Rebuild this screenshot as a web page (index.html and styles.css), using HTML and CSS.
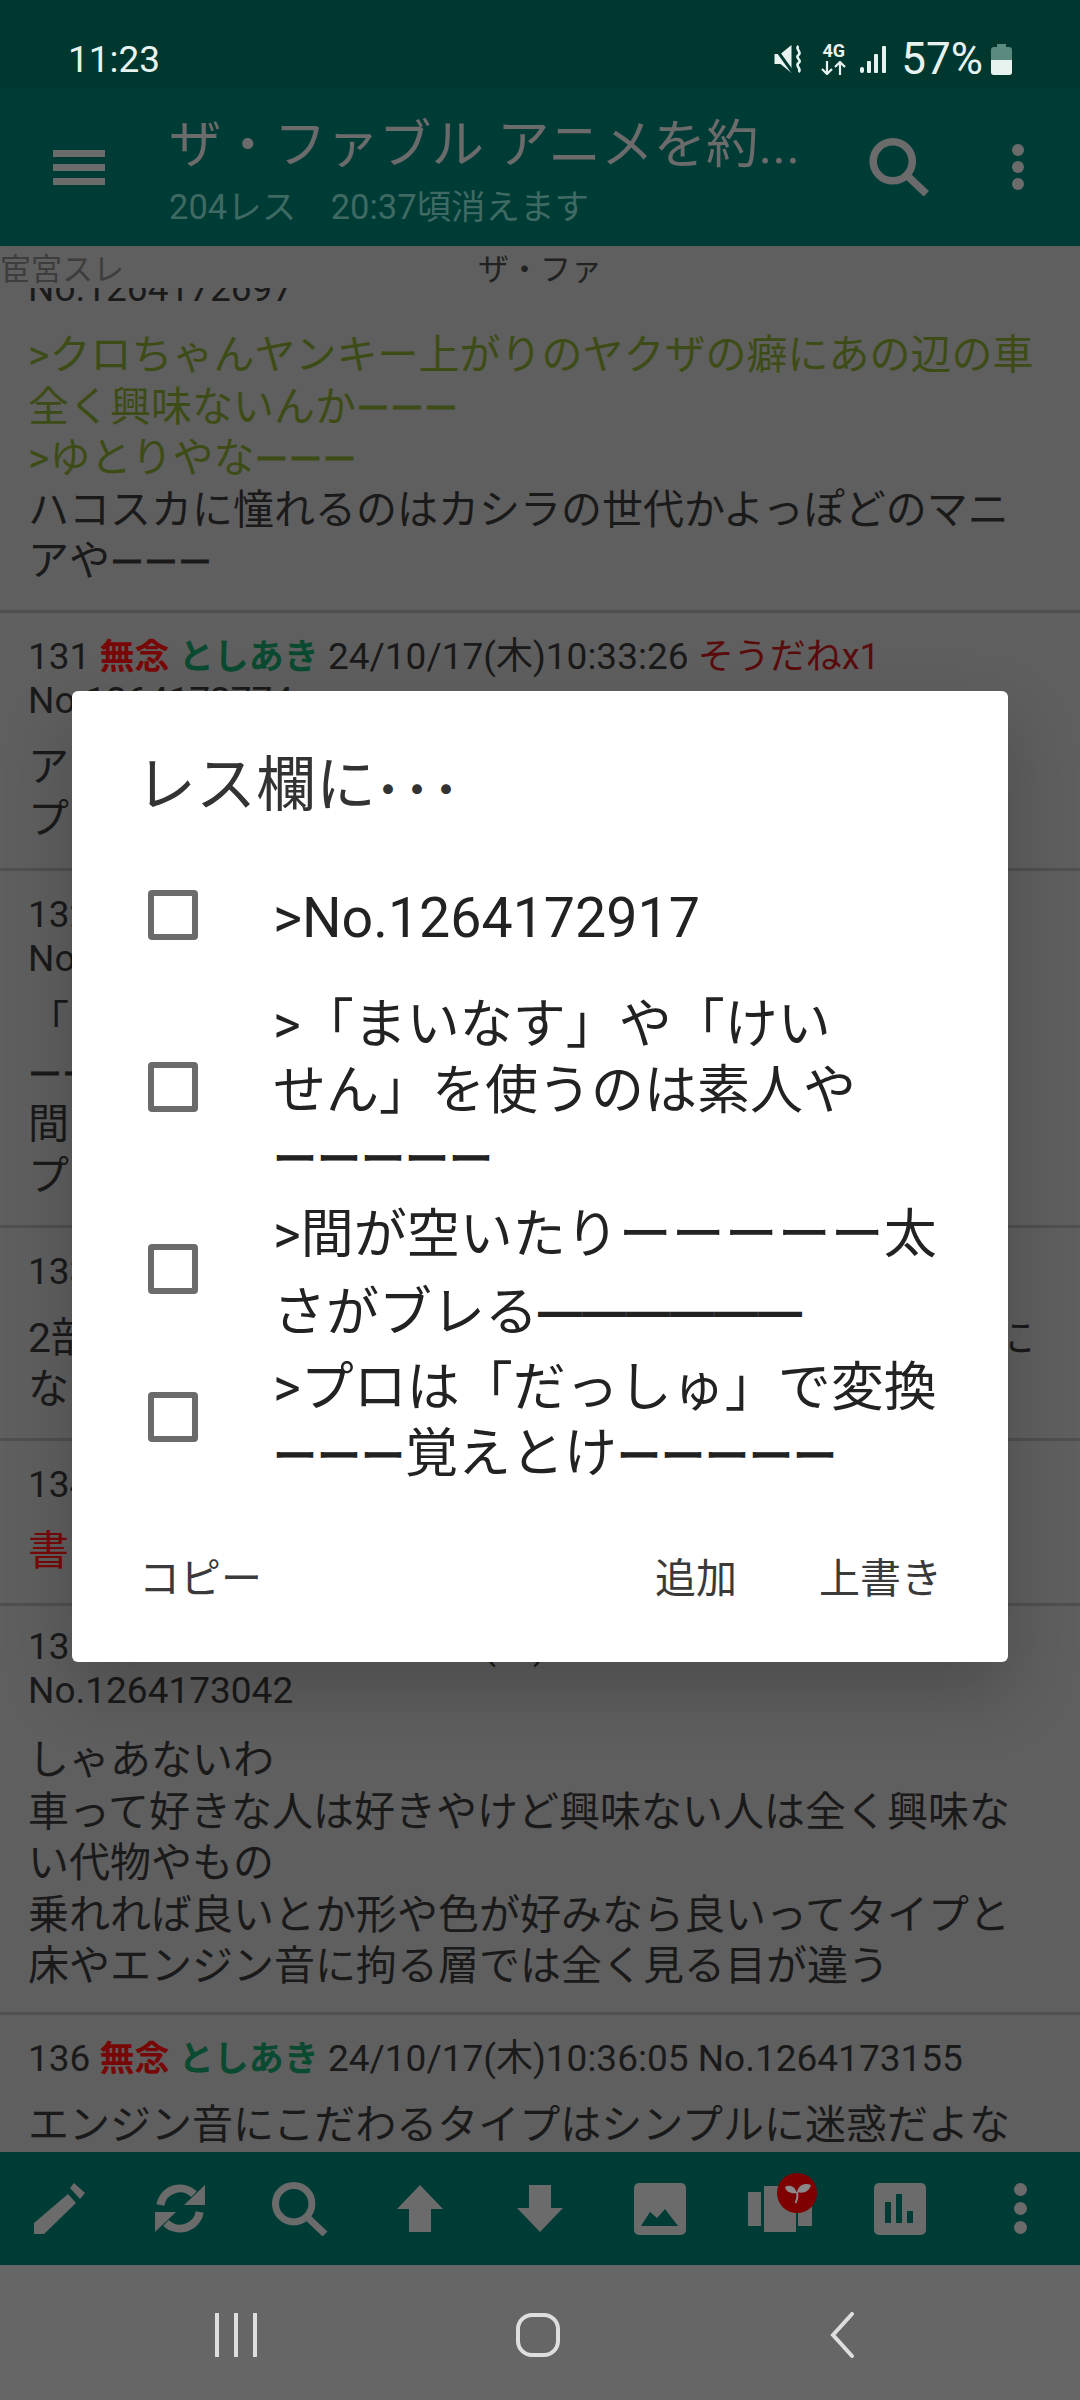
FILE: index.html
```html
<!DOCTYPE html>
<html lang="ja">
<head>
    <meta charset="UTF-8">
    <meta name="viewport" content="width=device-width, initial-scale=1.0">
    <title>ザ・ファブル アニメを約...</title>
    <link rel="stylesheet" href="styles.css">
</head>
<body>
    <div id="app">
        <div class="status-bar">
            <span class="clock">11:23</span>
            <div class="status-icons">
                <svg class="ic-mute" viewBox="0 0 29 28"><path d="M0 9h6L17 0v28L6 19H0z" fill="#e8f3f0"/><path d="M0 2l18 25" stroke="#00382f" stroke-width="3"/><path d="M24 1c-4 3 4 6 0 9s4 5 0 8 4 6 0 9" fill="none" stroke="#e8f3f0" stroke-width="2.6"/></svg>
                <div class="net">
                    <span class="net-label">4G</span>
                    <svg viewBox="0 0 25 14"><path d="M6 0v13M1 8l5 5 5-5M19 14V1M14 6l5-5 5 5" fill="none" stroke="#e8f3f0" stroke-width="2.2"/></svg>
                </div>
                <svg class="ic-signal" viewBox="0 0 26 27"><rect x="0" y="21" width="4" height="6" rx="2" fill="#e8f3f0"/><rect x="7" y="15" width="4" height="12" rx="1" fill="#e8f3f0"/><rect x="14" y="8" width="4" height="19" rx="1" fill="#e8f3f0"/><rect x="22" y="0" width="4" height="27" rx="1" fill="#e8f3f0"/></svg>
                <span class="battery-text">57%</span>
                <svg class="ic-battery" viewBox="0 0 21 31"><path d="M6 0h9v3h3a3 3 0 0 1 3 3v22a3 3 0 0 1-3 3H3a3 3 0 0 1-3-3V6a3 3 0 0 1 3-3h3z" fill="#5a8a80"/><path d="M0 16h21v12a3 3 0 0 1-3 3H3a3 3 0 0 1-3-3z" fill="#e8f3f0"/></svg>
            </div>
        </div>

        <div class="app-bar">
            <div class="burger"><i></i><i></i><i></i></div>
            <div class="titles">
                <div class="title">ザ・ファブル アニメを約...</div>
                <div class="subtitle">204レス　20:37頃消えます</div>
            </div>
            <svg class="ic-search" viewBox="0 0 56 54"><circle cx="21.7" cy="21.7" r="18.2" fill="none" stroke="#6b6b6b" stroke-width="7"/><path d="M34 34l19 18" fill="none" stroke="#6b6b6b" stroke-width="7"/></svg>
            <div class="dots top-dots"><i></i><i></i><i></i></div>
        </div>

        <div class="content">
            <div class="tabs">
                <span class="tab-old">宦宮スレ</span>
                <span class="tab-cur">ザ・ファ</span>
            </div>
            <div class="list">
                <div class="res first">
                    <div class="head">No.1264172697</div>
                    <div class="body"><span class="quote">&gt;クロちゃんヤンキー上がりのヤクザの癖にあの辺の車<br>全く興味ないんか<span class="dash">ーーー</span><br>&gt;ゆとりやな<span class="dash">ーーー</span></span><br>ハコスカに憧れるのはカシラの世代かよっぽどのマニ<br>アや<span class="dash">ーーー</span></div>
                </div>
                <div class="res">
                    <div class="head">131 <b class="nen">無念</b> <b class="name">としあき</b> 24/10/17(木)10:33:26 <span class="sod">そうだねx1</span><br>No.1264172774</div>
                    <div class="body">ア<br>プ</div>
                </div>
                <div class="res tight">
                    <div class="head">132 <b class="nen">無念</b> <b class="name">としあき</b> 24/10/17(木)10:33:40<br>No.1264172917</div>
                    <div class="body">「<br><span class="dash">ーーー</span><br>間<br>プ</div>
                </div>
                <div class="res">
                    <div class="head">133 <b class="nen">無念</b> <b class="name">としあき</b> 24/10/17(木)10:34:12 No.1264172980</div>
                    <div class="body">2部の最初の方の話はアニメでやらんかったのが本当に<br>な</div>
                </div>
                <div class="res del">
                    <div class="head">134 <b class="nen">無念</b> <b class="name">としあき</b> 24/10/17(木)10:34:30 No.1264173001</div>
                    <div class="body"><span class="deleted">書き込みをした人によって削除されました</span></div>
                </div>
                <div class="res after-del">
                    <div class="head">135 <b class="nen">無念</b> <b class="name">としあき</b> 24/10/17(木)10:35:18 <span class="sod">そうだねx1</span><br>No.1264173042</div>
                    <div class="body">しゃあないわ<br>車って好きな人は好きやけど興味ない人は全く興味な<br>い代物やもの<br>乗れれば良いとか形や色が好みなら良いってタイプと<br>床やエンジン音に拘る層では全く見る目が違う</div>
                </div>
                <div class="res">
                    <div class="head">136 <b class="nen">無念</b> <b class="name">としあき</b> 24/10/17(木)10:36:05 No.1264173155</div>
                    <div class="body">エンジン音にこだわるタイプはシンプルに迷惑だよな</div>
                </div>
            </div>
        </div>

        <div class="bottom-bar">
            <div class="tool"><svg class="ic-edit" viewBox="0 0 52 52"><path d="M0 40L34 11l8 9-32 31H0zM40 0l11 10-5 6-10-11z"/></svg></div>
            <div class="tool"><svg class="ic-sync" viewBox="0 0 50 49"><path d="M5.3 21A20 20 0 0 1 39 10.2" fill="none" stroke="#6b6b6b" stroke-width="8"/><path d="M50 1v20H29z"/><path d="M44.7 28A20 20 0 0 1 11 38.8" fill="none" stroke="#6b6b6b" stroke-width="8"/><path d="M0 48V28h21z"/></svg></div>
            <div class="tool"><svg class="ic-find" viewBox="0 0 56 54"><circle cx="21.7" cy="21.7" r="18.2" fill="none" stroke="#6b6b6b" stroke-width="7"/><path d="M34 34l19 18" fill="none" stroke="#6b6b6b" stroke-width="7"/></svg></div>
            <div class="tool"><svg class="ic-arrow" viewBox="0 0 46 47"><path d="M23 0l23 24H34v23H12V24H0z"/></svg></div>
            <div class="tool"><svg class="ic-arrow" viewBox="0 0 46 47"><path d="M23 47L0 23h12V0h22v23h12z"/></svg></div>
            <div class="tool"><svg class="ic-image" viewBox="0 0 52 52"><path fill-rule="evenodd" d="M5 0h42a5 5 0 0 1 5 5v42a5 5 0 0 1-5 5H5a5 5 0 0 1-5-5V5a5 5 0 0 1 5-5zM7 43h37L31 26l-8 9-7-6z"/></svg></div>
            <div class="tool badge-tool">
                <svg class="ic-pages" viewBox="0 0 64 46"><rect x="0" y="6" width="13" height="34"/><rect x="16" y="0" width="32" height="46"/><rect x="50" y="6" width="14" height="34"/></svg>
                <div class="badge"><svg viewBox="0 0 40 40"><path d="M8 14c4-3 10-1 12 6-6 1-11-1-12-6zM34 12c-5-2-12-1-14 7 6 2 12 0 14-7z"/><path d="M20 19c1 4 0 8-1.5 11" fill="none" stroke="#8a8a8a" stroke-width="2"/></svg></div>
            </div>
            <div class="tool"><svg class="ic-chart" viewBox="0 0 52 52"><path fill-rule="evenodd" d="M5 0h42a5 5 0 0 1 5 5v42a5 5 0 0 1-5 5H5a5 5 0 0 1-5-5V5a5 5 0 0 1 5-5zM11 19v21h6V19zM22 11v29h6V11zM33 28v12h6V28z"/></svg></div>
            <div class="tool"><div class="dots"><i></i><i></i><i></i></div></div>
        </div>

        <div class="nav-bar">
            <svg class="nav-recent" viewBox="0 0 42 44"><path d="M2 1v42M21 1v42M40 1v42"/></svg>
            <svg class="nav-home" viewBox="0 0 44 44"><rect x="2" y="2" width="40" height="40" rx="14"/></svg>
            <svg class="nav-back" viewBox="0 0 24 46"><path d="M22 2L3 23l19 21"/></svg>
        </div>

        <div class="dialog">
            <div class="dialog-title">レス欄に<span class="title-dots">・・・</span></div>
            <div class="opt opt-one">
                <div class="check"></div>
                <div class="opt-text">&gt;No.1264172917</div>
            </div>
            <div class="opt">
                <div class="check"></div>
                <div class="opt-text">&gt;「まいなす」や「けい<br>せん」を使うのは素人や<br><span class="dash">ーーーーー</span></div>
            </div>
            <div class="opt opt-tall">
                <div class="check"></div>
                <div class="opt-text">&gt;間が空いたりーーーーー太<br>さがブレる<span class="thick">━━━━━━</span></div>
            </div>
            <div class="opt">
                <div class="check"></div>
                <div class="opt-text">&gt;プロは「だっしゅ」で変換<br><span class="dash">ーーー</span>覚えとけ<span class="dash">ーーーーー</span></div>
            </div>
            <div class="dialog-actions">
                <span class="act">コピー</span>
                <div class="act-right">
                    <span class="act">追加</span>
                    <span class="act">上書き</span>
                </div>
            </div>
        </div>
    </div>
</body>
</html>
```

FILE: styles.css
```css
* {
    box-sizing: border-box;
}
body {
    margin: 0;
    font-family: Roboto, "Noto Sans CJK JP", sans-serif;
    background: #5f5f5f;
}
#app {
    position: relative;
    width: 1080px;
    height: 2400px;
    display: flex;
    flex-direction: column;
    overflow: hidden;
}
svg {
    display: block;
}

/* status bar */
.status-bar {
    height: 88px;
    flex: none;
    background: #00382f;
    color: #e8f3f0;
    display: flex;
    align-items: center;
    justify-content: space-between;
    padding: 30px 68px 0 68px;
}
.clock {
    font-size: 37px;
}
.status-icons {
    display: flex;
    align-items: center;
}
.ic-mute {
    width: 30px;
    height: 28px;
    margin-right: 17px;
}
.net {
    width: 25px;
    margin-right: 14px;
}
.net-label {
    display: block;
    font-size: 18px;
    font-weight: 700;
    line-height: 16px;
    text-align: center;
}
.net svg {
    width: 25px;
    height: 14px;
    margin-top: 2px;
}
.ic-signal {
    width: 26px;
    height: 27px;
    margin-right: 15px;
}
.battery-text {
    font-size: 44px;
    line-height: 44px;
    margin-right: 8px;
}
.ic-battery {
    width: 21px;
    height: 31px;
}

/* app bar */
.app-bar {
    height: 158px;
    flex: none;
    background: #003c36;
    display: flex;
    align-items: center;
}
.burger {
    width: 52px;
    margin-left: 53px;
    margin-right: 64px;
    display: flex;
    flex-direction: column;
    gap: 7px;
}
.burger i {
    display: block;
    height: 7px;
    background: #6b6b6b;
}
.titles {
    width: 700px;
    padding-top: 9px;
}
.title {
    font-size: 52.5px;
    line-height: 62px;
    color: #6b6b6b;
    white-space: nowrap;
}
.subtitle {
    margin-top: 9px;
    font-size: 34.5px;
    line-height: 44px;
    color: #3f6a63;
    white-space: nowrap;
}
.ic-search {
    width: 61px;
    height: 58px;
    flex: none;
    margin-right: 82px;
}
.dots {
    display: flex;
    flex-direction: column;
    gap: 6px;
}
.dots i {
    display: block;
    width: 13px;
    height: 13px;
    border-radius: 50%;
    background: #6b6b6b;
}
.top-dots {
    gap: 5px;
}
.top-dots i {
    width: 12px;
    height: 12px;
}

/* thread */
.content {
    flex: 1;
    min-height: 0;
    position: relative;
    overflow: hidden;
    background: #5f5f5f;
    color: #1a1a1a;
}
.tabs {
    position: absolute;
    top: 0;
    left: 0;
    right: 0;
    height: 42px;
    padding-top: 6px;
    background: #5f5f5f;
    z-index: 1;
    font-size: 31px;
    line-height: 36px;
    white-space: nowrap;
}
.tab-old {
    color: #3d3d3d;
    position: absolute;
    left: 0;
}
.tab-cur {
    color: #222;
    position: absolute;
    left: 478px;
}
.list {
    margin-top: 21px;
}
.res {
    padding: 22px 28px 22.5px;
    border-bottom: 3px solid #4f4f4f;
    white-space: nowrap;
}
.res.first {
    padding-top: 0;
}
.res.del {
    padding-bottom: 25.5px;
}
.res.after-del {
    padding-top: 19px;
    padding-bottom: 19.5px;
}
.head {
    font-size: 37px;
    line-height: 44px;
}
.body {
    margin-top: 19px;
    font-size: 41px;
    line-height: 51.5px;
}
.tight .body {
    margin-top: 15.5px;
}
.after-del .body {
    margin-top: 22px;
}
.dash {
    font-size: 0.83em;
    line-height: 0;
    -webkit-text-stroke: 0.8px currentColor;
}
.nen,
.name {
    font-size: 35px;
    line-height: 0;
}
.nen {
    color: #780808;
}
.name {
    color: #0a4a30;
}
.sod {
    font-size: 36px;
    line-height: 0;
    color: #5a0c0c;
}
.quote {
    color: #3d4c16;
}
.deleted {
    color: #780808;
}

/* bottom tools */
.bottom-bar {
    height: 113px;
    flex: none;
    background: #003c36;
    display: flex;
}
.tool {
    width: 120px;
    display: flex;
    align-items: center;
    justify-content: center;
    position: relative;
}
.tool svg {
    fill: #6b6b6b;
}
.ic-edit {
    width: 52px;
    height: 52px;
}
.ic-sync {
    width: 50px;
    height: 49px;
}
.ic-find {
    width: 56px;
    height: 54px;
}
.ic-arrow {
    width: 46px;
    height: 47px;
}
.ic-image,
.ic-chart {
    width: 52px;
    height: 52px;
}
.ic-pages {
    width: 64px;
    height: 46px;
}
.badge {
    position: absolute;
    left: 57px;
    top: 21px;
    width: 40px;
    height: 40px;
    border-radius: 50%;
    background: #7e0000;
}
.tool .badge svg {
    width: 40px;
    height: 40px;
    fill: #8a8a8a;
}

/* nav */
.nav-bar {
    flex: none;
    height: 135px;
    background: #666;
    position: relative;
}
.nav-bar svg {
    position: absolute;
    fill: none;
    stroke: #dedede;
    stroke-width: 4;
    stroke-linecap: round;
}
.nav-recent {
    left: 215px;
    top: 48px;
    width: 42px;
    height: 44px;
}
.nav-home {
    left: 516px;
    top: 48px;
    width: 44px;
    height: 44px;
}
.nav-back {
    left: 830px;
    top: 47px;
    width: 24px;
    height: 46px;
}

/* dialog */
.dialog {
    position: absolute;
    left: 72px;
    top: 691px;
    width: 936px;
    height: 971px;
    background: #fff;
    border-radius: 6px;
    box-shadow: 0 30px 70px rgba(0, 0, 0, 0.2);
    color: #222;
    display: flex;
    flex-direction: column;
}
.dialog-title {
    height: 151px;
    padding: 60px 0 0 64px;
    font-size: 60px;
    line-height: 70px;
    color: #333;
}
.title-dots {
    font-size: 46px;
    line-height: 0;
    letter-spacing: -17px;
    margin-left: -11px;
}
.opt {
    display: flex;
    align-items: center;
    padding-left: 76px;
    font-size: 53px;
    line-height: 66px;
}
.opt-one {
    height: 146px;
    font-size: 55.5px;
}
.opt-tall {
    line-height: 78px;
    padding: 5px 0 4px 76px;
}
.check {
    width: 50px;
    height: 50px;
    flex: none;
    border: 6px solid #6b6b6b;
    border-radius: 4px;
    margin-right: 75px;
}
.opt-text {
    white-space: nowrap;
    margin: 4px 0 -4px;
}
.opt-tall .opt-text {
    margin: 5px 0 -5px;
}
.opt .dash {
    -webkit-text-stroke: 1.4px currentColor;
}
.thick {
    font-size: 44px;
    font-weight: 700;
    line-height: 0;
}
.dialog-actions {
    flex: 1;
    display: flex;
    justify-content: space-between;
    align-items: center;
    padding: 4px 66px 0 67px;
    font-size: 41px;
    color: #3a3a3a;
}
.act-right {
    display: flex;
    gap: 82px;
}
```
